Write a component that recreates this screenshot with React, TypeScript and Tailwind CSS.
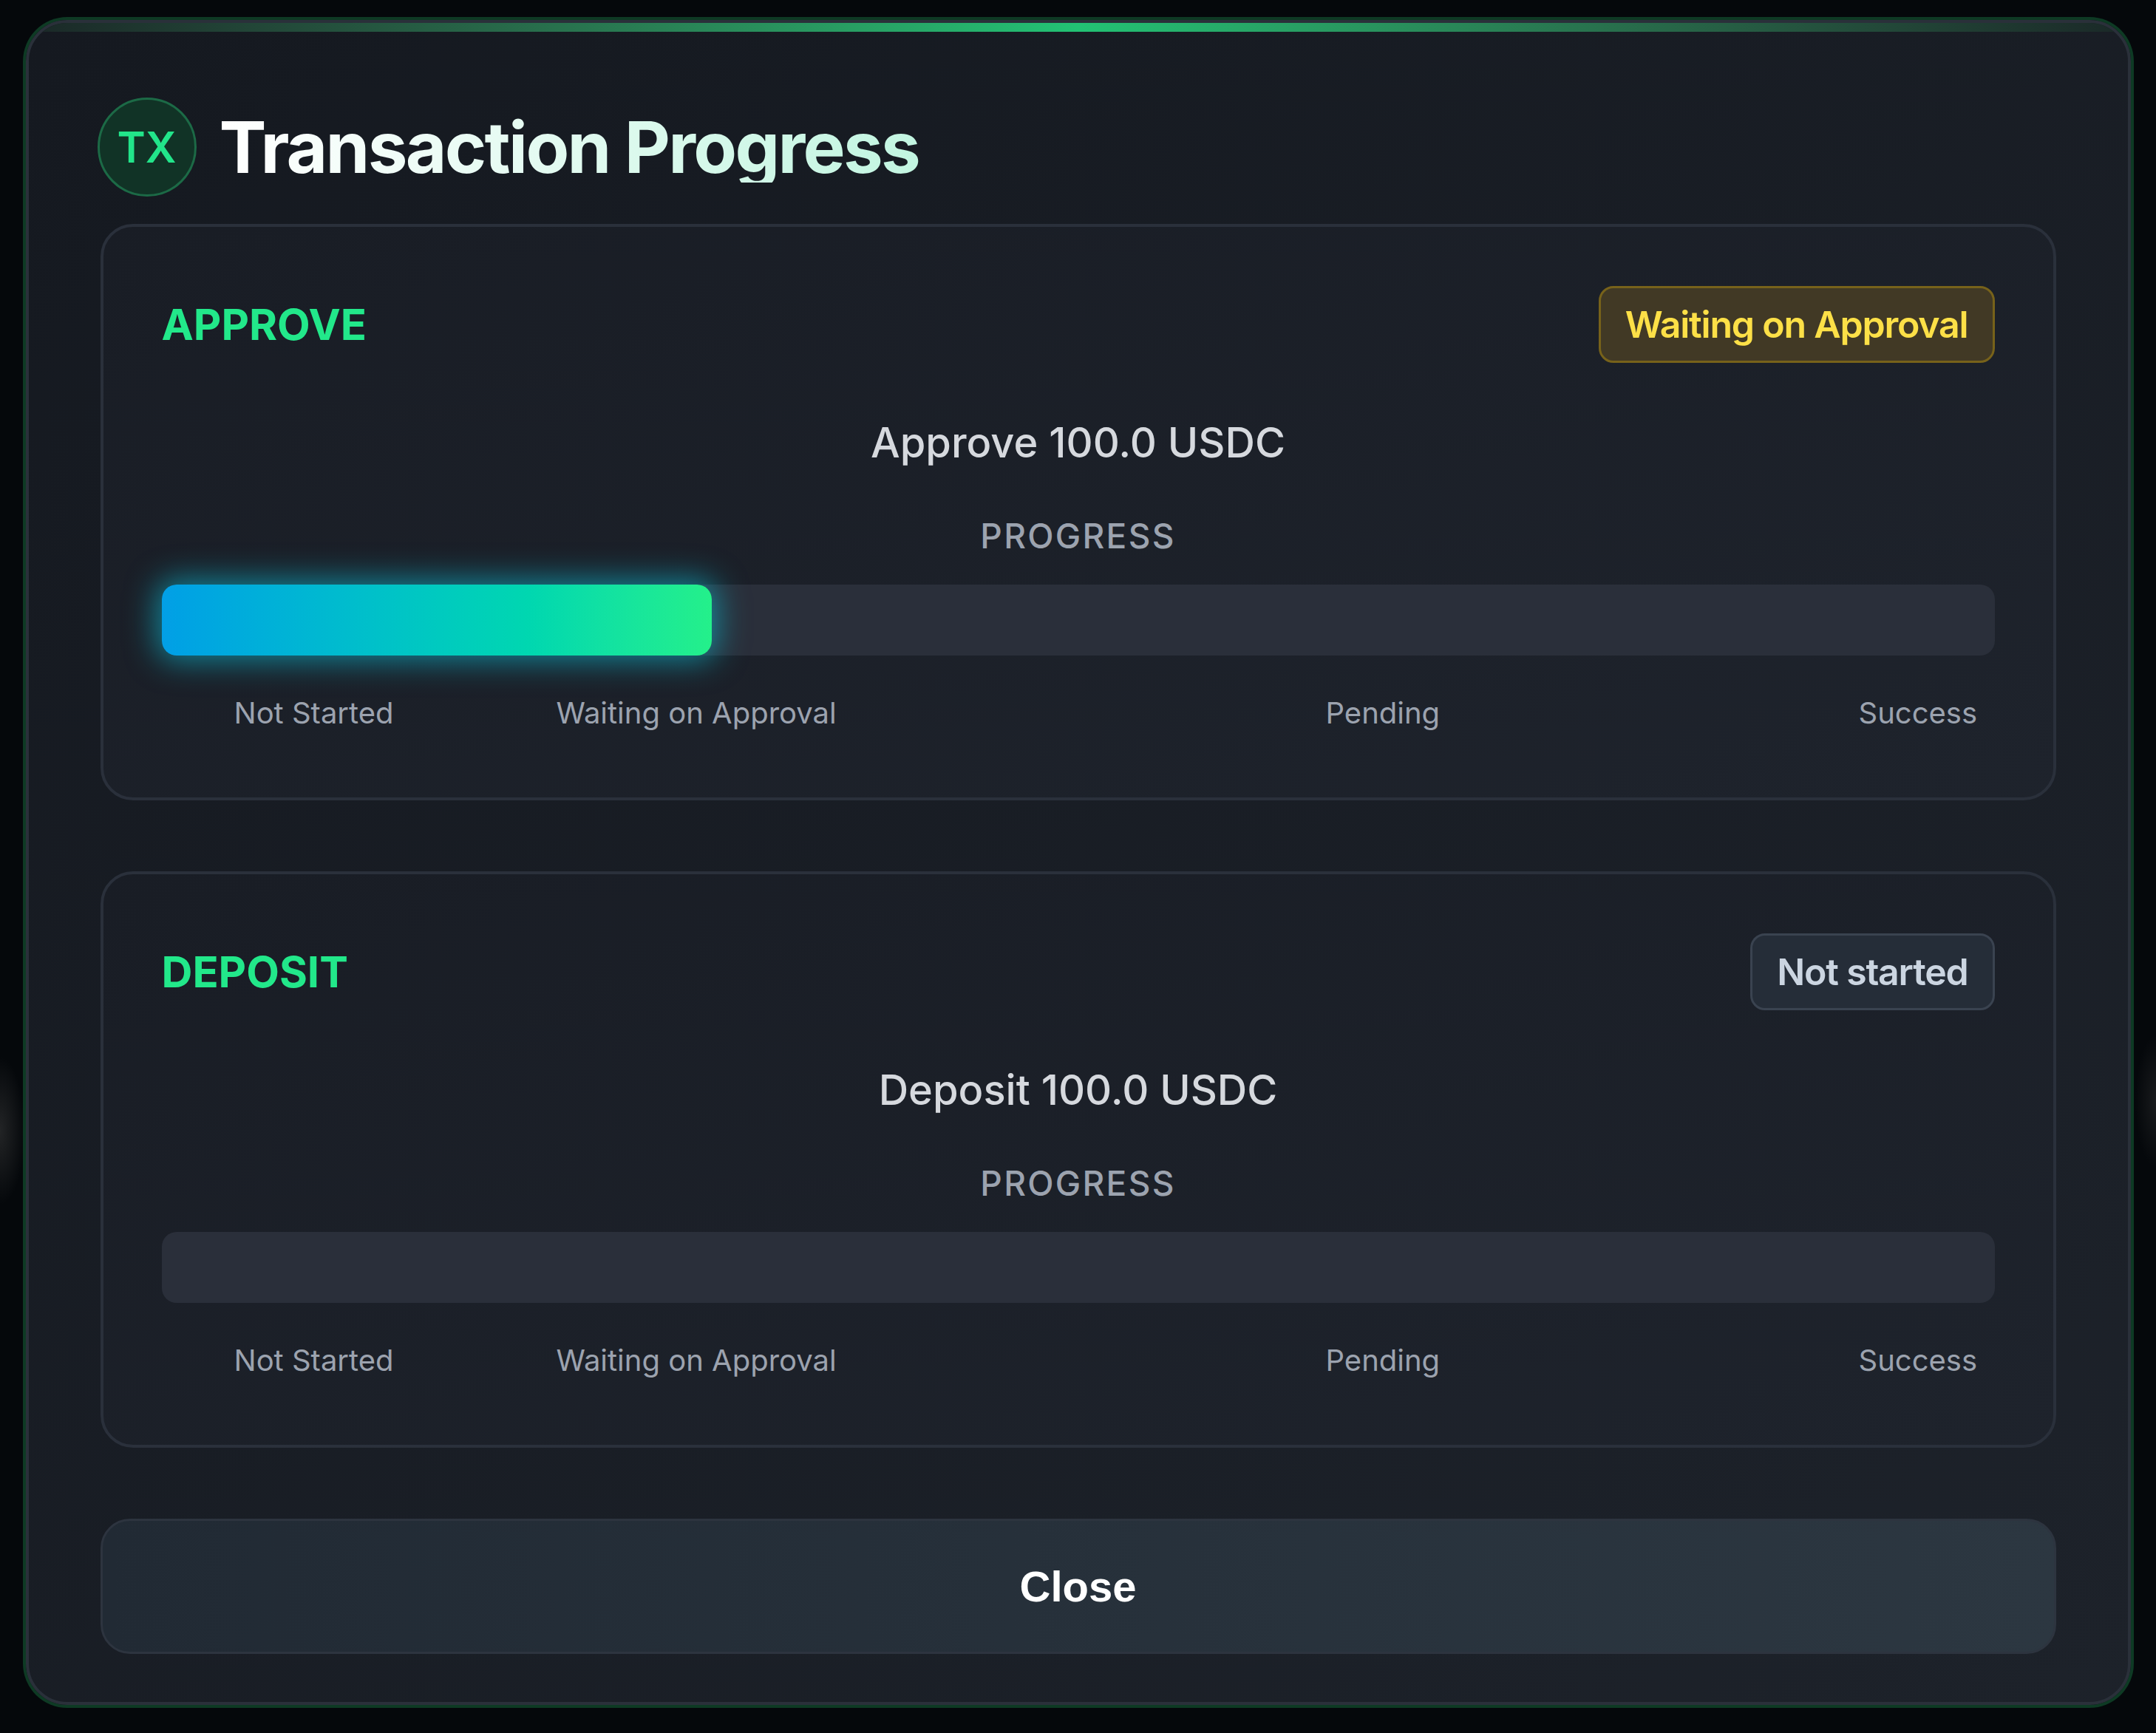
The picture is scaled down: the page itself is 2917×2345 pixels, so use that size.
import React from "react";

type StepProps = {
  label: string;
  title: string;
  badgeText: string;
  badgeClass: string;
  fill: boolean;
};

function StepCard({ label, title, badgeText, badgeClass, fill }: StepProps) {
  return (
    <div className="rounded-[44px] border-4 border-[#2a303b] bg-gradient-to-br from-[#191d25] to-[#1e232c] px-[79px] pt-[80px] pb-[90px]">
      <div className="flex h-[104px] items-center justify-between">
        <span className="text-[58px] font-bold leading-none text-[#22e88a]">{label}</span>
        <span
          className={
            "rounded-[20px] border-[3px] px-[33px] py-[21px] text-[50px] font-semibold leading-[56px] tracking-[-0.024em] " +
            badgeClass
          }
        >
          {badgeText}
        </span>
      </div>
      <div className="mt-[74px] text-center text-[56px] font-medium leading-[68px] text-[#d6d9de]">
        {title}
      </div>
      <div className="mt-[64px] text-center text-[46px] font-medium leading-[56px] tracking-[0.05em] text-[#9ca3af]">
        PROGRESS
      </div>
      <div className="mt-[38px] h-[96px] rounded-[20px] bg-[#2a2f3a]">
        {fill && (
          <div className="h-full w-[30%] rounded-[20px] bg-gradient-to-r from-[#039fe6] to-[#24f08a] shadow-[0_0_40px_8px_rgba(14,190,215,0.6)]" />
        )}
      </div>
      <div className="mt-[54px] flex pl-[98px] text-[40px] leading-[48px] text-[#9ca3af]">
        <span className="w-[436px] shrink-0">Not Started</span>
        <span className="w-[1041px] shrink-0">Waiting on Approval</span>
        <span className="w-[721px] shrink-0">Pending</span>
        <span>Success</span>
      </div>
    </div>
  );
}

export default function App() {
  return (
    <div className="flex min-h-[2345px] w-full justify-center bg-[#05080b] bg-[radial-gradient(ellipse_34px_100px_at_0px_1530px,rgba(70,70,70,0.45),transparent),radial-gradient(ellipse_28px_90px_at_2917px_1490px,rgba(60,60,60,0.35),transparent)] pt-[27px] font-[Inter,sans-serif]">
      <div className="flex h-fit w-[2848px] flex-col overflow-hidden rounded-[56px] border-4 border-[#2a303a] bg-gradient-to-br from-[#151920] to-[#1d222a] shadow-[0_0_0_4px_#0e3a24]">
        <div className="h-[12px] bg-gradient-to-r from-[#1a2827] via-[#22c274] to-[#1a2827]" />
        <div className="flex flex-col px-[97px] pt-[89px] pb-[65px]">
          <div className="flex h-[134px] items-center gap-[31px]">
            <div className="-ml-[4px] flex h-[134px] w-[134px] items-center justify-center rounded-full border-[3px] border-[#1c6a46] bg-[#113326] text-[58px] font-semibold leading-none text-[#22e58a]">
              TX
            </div>
            <h1 className="bg-gradient-to-r from-white to-[#c2f5e1] bg-clip-text text-[96px] font-bold leading-[96px] tracking-[-0.028em] text-transparent">
              Transaction Progress
            </h1>
          </div>
          <div className="mt-[37px] flex flex-col gap-[96px]">
            <StepCard
              label="APPROVE"
              title="Approve 100.0 USDC"
              badgeText="Waiting on Approval"
              badgeClass="border-[#77621a] bg-[#413925] text-[#fde047]"
              fill={true}
            />
            <StepCard
              label="DEPOSIT"
              title="Deposit 100.0 USDC"
              badgeText="Not started"
              badgeClass="border-[#3a4350] bg-[#252d38] text-[#cbd5e1]"
              fill={false}
            />
          </div>
          <button className="mt-[96px] flex h-[183px] w-full items-center justify-center rounded-[40px] border-[3px] border-[#2d343f] bg-gradient-to-r from-[#212a34] to-[#2c3741] font-[Liberation_Sans,Arial,sans-serif] text-[58px] font-bold text-white">
            Close
          </button>
        </div>
      </div>
    </div>
  );
}
